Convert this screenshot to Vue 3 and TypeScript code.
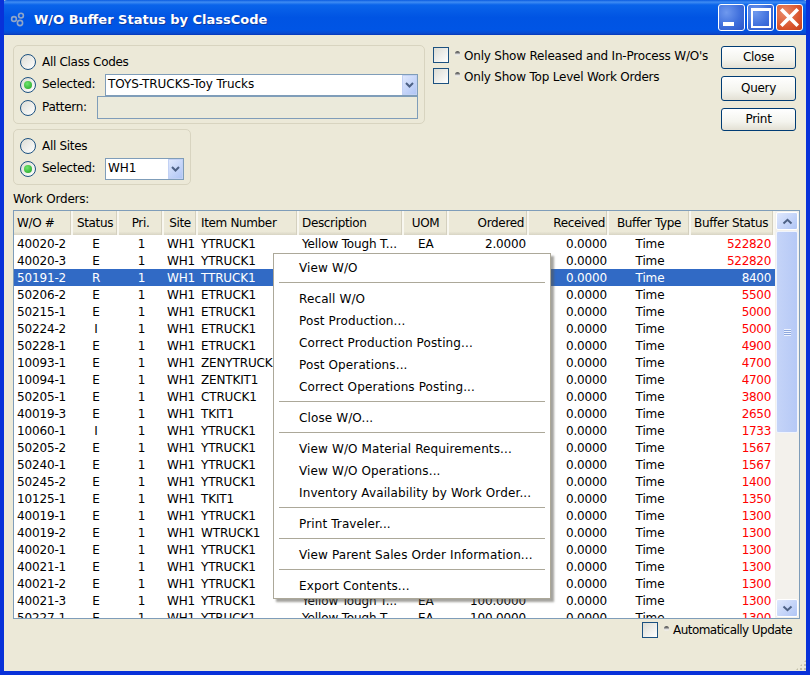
<script setup lang="ts">
interface Row { wo: string; st: string; item: string; desc: string; uom: string; ord: string; buf: string; sel?: boolean }
const y = 'YTRUCK1', e = 'ETRUCK1', d = 'Yellow Tough T...'
const mk = (wo: string, st: string, item: string, buf: string, ord = '100.0000', sel = false): Row => ({ wo, st, item, desc: d, uom: 'EA', ord, buf, sel })
const rows: Row[] = [
  mk('40020-2', 'E', y, '522820', '2.0000'), mk('40020-3', 'E', y, '522820'), mk('50191-2', 'R', 'TTRUCK1', '8400', '100.0000', true),
  mk('50206-2', 'E', e, '5500'), mk('50215-1', 'E', e, '5000'), mk('50224-2', 'I', e, '5000'), mk('50228-1', 'E', e, '4900'),
  mk('10093-1', 'E', 'ZENYTRUCK1', '4700'), mk('10094-1', 'E', 'ZENTKIT1', '4700'), mk('50205-1', 'E', 'CTRUCK1', '3800'),
  mk('40019-3', 'E', 'TKIT1', '2650'), mk('10060-1', 'I', y, '1733'), mk('50205-2', 'E', y, '1567'), mk('50240-1', 'E', y, '1567'),
  mk('50245-2', 'E', y, '1400'), mk('10125-1', 'E', 'TKIT1', '1350'), mk('40019-1', 'E', y, '1300'), mk('40019-2', 'E', 'WTRUCK1', '1300'),
  mk('40020-1', 'E', y, '1300'), mk('40021-1', 'E', y, '1300'), mk('40021-2', 'E', y, '1300'), mk('40021-3', 'E', y, '1300'), mk('50227-1', 'E', y, '1300'),
]
const menu: string[][] = [
  ['View W/O'],
  ['Recall W/O', 'Post Production...', 'Correct Production Posting...', 'Post Operations...', 'Correct Operations Posting...'],
  ['Close W/O...'],
  ['View W/O Material Requirements...', 'View W/O Operations...', 'Inventory Availability by Work Order...'],
  ['Print Traveler...'],
  ['View Parent Sales Order Information...'],
  ['Export Contents...'],
]
const heads = [
  { t: 'W/O #', c: 'c-wo' }, { t: 'Status', c: 'c-st' }, { t: 'Pri.', c: 'c-pri' }, { t: 'Site', c: 'c-site' }, { t: 'Item Number', c: 'c-item' },
  { t: 'Description', c: 'c-desc' }, { t: 'UOM', c: 'c-uom' }, { t: 'Ordered', c: 'c-ord' }, { t: 'Received', c: 'c-rec' }, { t: 'Buffer Type', c: 'c-type' }, { t: 'Buffer Status', c: 'c-buf' },
]
</script>

<template>
  <div class="win">
    <header class="title">
      <svg class="appicon" width="16" height="16" viewBox="0 0 16 16" fill="none" stroke="#8fa6c8" stroke-width="1.6">
        <circle cx="4" cy="7" r="2.4" /><circle cx="11" cy="3.6" r="2.4" /><circle cx="10" cy="11" r="2.6" />
      </svg>
      <span class="title-text">W/O Buffer Status by ClassCode</span>
      <div class="caps">
        <span class="cap cap-min"><i></i></span>
        <span class="cap cap-max"><i></i></span>
        <span class="cap cap-close">
          <svg width="25" height="25" viewBox="0 0 25 25"><path d="M5.5 5.5 L19.5 19.5 M19.5 5.5 L5.5 19.5" stroke="#fff" stroke-width="3.6" stroke-linecap="square" /></svg>
        </span>
      </div>
    </header>

    <main class="body">
      <section class="top">
        <div class="filters">
          <div class="group g-class">
            <div class="line"><span class="radio"></span><span class="lbl">All Class Codes</span></div>
            <div class="line">
              <span class="radio on"></span><span class="lbl lbl-w">Selected:</span>
              <div class="combo combo-class"><span class="combo-text">TOYS-TRUCKS-Toy Trucks</span><span class="drop"><svg width="9" height="6" viewBox="0 0 9 6"><path d="M1 1 L4.5 4.5 L8 1" fill="none" stroke="#4d6185" stroke-width="2" /></svg></span></div>
            </div>
            <div class="line">
              <span class="radio"></span><span class="lbl lbl-p">Pattern:</span>
              <div class="pattern"></div>
            </div>
          </div>
          <div class="group g-site">
            <div class="line"><span class="radio"></span><span class="lbl">All Sites</span></div>
            <div class="line">
              <span class="radio on"></span><span class="lbl lbl-w">Selected:</span>
              <div class="combo combo-site"><span class="combo-text">WH1</span><span class="drop"><svg width="9" height="6" viewBox="0 0 9 6"><path d="M1 1 L4.5 4.5 L8 1" fill="none" stroke="#4d6185" stroke-width="2" /></svg></span></div>
            </div>
          </div>
        </div>
        <div class="checks">
          <div class="check-line"><span class="check"></span><span class="dot"></span><span>Only Show Released and In-Process W/O's</span></div>
          <div class="check-line"><span class="check"></span><span class="dot"></span><span>Only Show Top Level Work Orders</span></div>
        </div>
        <div class="btns">
          <button class="btn">Close</button>
          <button class="btn btn-q">Query</button>
          <button class="btn">Print</button>
        </div>
      </section>

      <div class="wo-label">Work Orders:</div>

      <section class="table">
        <div class="grid">
          <div class="thead">
            <div v-for="h in heads" :key="h.t" class="th" :class="h.c">{{ h.t }}</div>
          </div>
          <div class="tbody">
            <div v-for="r in rows" :key="r.wo" class="tr" :class="{ sel: r.sel }">
              <div class="td c-wo">{{ r.wo }}</div>
              <div class="td c-st">{{ r.st }}</div>
              <div class="td c-pri">1</div>
              <div class="td c-site">WH1</div>
              <div class="td c-item">{{ r.item }}</div>
              <div class="td c-desc">{{ r.desc }}</div>
              <div class="td c-uom">{{ r.uom }}</div>
              <div class="td c-ord">{{ r.ord }}</div>
              <div class="td c-rec">0.0000</div>
              <div class="td c-type">Time</div>
              <div class="td c-buf buf">{{ r.buf }}</div>
            </div>
          </div>
        </div>
        <div class="sbar">
          <span class="sbtn"><svg width="11" height="7" viewBox="0 0 11 7"><path d="M1.5 5.5 L5.5 1.8 L9.5 5.5" fill="none" stroke="#4d6185" stroke-width="2" /></svg></span>
          <div class="track">
            <div class="thumb"><span class="grip"></span></div>
          </div>
          <span class="sbtn"><svg width="11" height="7" viewBox="0 0 11 7"><path d="M1.5 1.5 L5.5 5.2 L9.5 1.5" fill="none" stroke="#4d6185" stroke-width="2" /></svg></span>
        </div>

        <nav class="menu">
          <template v-for="(g, i) in menu" :key="i">
            <div v-if="i > 0" class="sep"></div>
            <div v-for="m in g" :key="m" class="mi">{{ m }}</div>
          </template>
        </nav>
      </section>

      <div class="bottom">
        <span class="check"></span><span class="dot"></span><span class="auto">Automatically Update</span>
      </div>
    </main>
    <span class="grip-corner"></span>
  </div>
</template>

<style>
html, body { margin: 0; padding: 0; }
</style>

<style scoped>
.win {
  position: relative;
  width: 810px; height: 675px; box-sizing: border-box; overflow: hidden;
  display: flex; flex-direction: column;
  background: #ece9d8;
  font: 12px/15px "DejaVu Sans", sans-serif; color: #000;
  border-left: 4px solid #0831d9; border-right: 4px solid #0831d9; border-bottom: 4px solid #0831d9;
}
.title {
  flex: none; height: 35px; margin: 0 -4px; padding: 3px 7px 0 10px; box-sizing: border-box; display: flex; align-items: center;
  border-radius: 7px 7px 0 0;
  background: linear-gradient(180deg, #0a5be0 0%, #3f8cf3 6%, #0a64ea 14%, #0054e3 50%, #0055e5 85%, #0a4bd0 95%, #0636b8 100%);
}
.appicon { flex: none; margin-right: 8px; margin-top: 1px; }
.title-text { color: #fff; font-weight: 700; font-size: 13px; letter-spacing: 0; text-shadow: 1px 1px 0 #0f3a9e; }
.caps { margin-left: auto; display: flex; gap: 2px; margin-top: -3px; }
.cap { width: 27px; height: 27px; box-sizing: border-box; border: 1px solid #fff; border-radius: 3px; position: relative; display: flex; align-items: center; justify-content: center; }
.cap-min, .cap-max { background: radial-gradient(circle at 30% 30%, #6f99ee 0%, #3f6fdc 55%, #2c55c8 100%); }
.cap-min i { position: absolute; left: 4px; bottom: 4px; width: 11px; height: 4px; background: #fff; }
.cap-max i { width: 20px; height: 20px; box-sizing: border-box; border: 2px solid #fff; border-top-width: 3px; }
.cap-close { background: radial-gradient(circle at 30% 30%, #ea8a68 0%, #d9552e 60%, #c4401c 100%); }

.body { flex: 1; min-height: 0; padding: 10px 9px 0; display: flex; flex-direction: column; }
.top { display: flex; flex: none; height: 143px; }
.filters { width: 412px; display: flex; flex-direction: column; gap: 5px; }
.group { box-sizing: border-box; border: 1px solid #d8d4c0; border-radius: 5px; padding: 5px 6px 0; }
.g-class { height: 79px; }
.g-site { width: 178px; height: 56px; }
.line { display: flex; align-items: center; height: 23px; white-space: nowrap; }
.line:first-child { height: 22px; }
.lbl { letter-spacing: -0.3px; }
.radio {
  flex: none; width: 16px; height: 16px; box-sizing: border-box; border: 1px solid #1c5180; border-radius: 50%;
  background: linear-gradient(135deg, #dcdcd4, #fff); margin-right: 6px; position: relative;
}
.radio.on::after { content: ""; position: absolute; left: 3px; top: 3px; width: 8px; height: 8px; border-radius: 50%; background: radial-gradient(circle at 40% 35%, #6fe56f, #21a121); }
.lbl-w { width: 63px; flex: none; }
.lbl-p { width: 55px; flex: none; }
.combo { height: 22px; box-sizing: border-box; border: 1px solid #7f9db9; background: #fff; display: flex; align-items: center; padding-left: 2px; }
.combo-class { width: 314px; }
.combo-site { width: 80px; }
.combo-text { flex: 1; letter-spacing: -0.05px; }
.drop { flex: none; width: 15px; height: 20px; background: linear-gradient(135deg, #dfe8fd, #b0c5f5); border: 1px solid #c2d1f4; box-sizing: border-box; display: flex; align-items: center; justify-content: center; }
.pattern { width: 322px; height: 23px; box-sizing: border-box; border: 1px solid #7f9db9; background: #ebeadb; }

.checks { margin-left: 8px; padding-top: 2px; width: 280px; display: flex; flex-direction: column; gap: 5px; letter-spacing: -0.2px; }
.check-line { display: flex; align-items: center; height: 16px; white-space: nowrap; }
.check-line > span:last-child { position: relative; top: 1px; }
.check { flex: none; width: 16px; height: 16px; box-sizing: border-box; border: 1px solid #1c5180; background: linear-gradient(135deg, #dcdcd4, #fff); }
.dot { flex: none; width: 5px; height: 5px; margin: 0 4px 0 6px; border-radius: 50% 50% 30% 30%; background: linear-gradient(180deg, #555 0%, #777 40%, #ddd 60%, #f4f2e8 100%); position: relative; top: -2px; }
.btns { margin-left: auto; margin-right: 1px; width: 75px; padding-top: 1px; display: flex; flex-direction: column; gap: 7px; }
.btn {
  width: 75px; height: 23px; padding: 0; box-sizing: border-box; border: 1px solid #003c74; border-radius: 3px;
  background: linear-gradient(180deg, #fff 0%, #f4f4ee 60%, #e3e0d4 100%); font: inherit; color: #000; letter-spacing: -0.3px;
}
.btn-q { height: 25px; }

.wo-label { flex: none; height: 18px; line-height: 15px; margin-top: 4px; letter-spacing: -0.2px; }

.table { position: relative; flex: none; width: 787px; height: 409px; box-sizing: border-box; border: 1px solid #7f9db9; background: #fff; display: flex; }
.grid { width: 761px; flex: none; overflow: hidden; display: flex; flex-direction: column; }
.thead { flex: none; height: 24px; display: flex; letter-spacing: -0.35px; background: linear-gradient(180deg, #ece9d8 0%, #ece9d8 85%, #d8d4c4 100%); }
.th { flex: none; box-sizing: border-box; height: 24px; line-height: 25px; padding: 0 3px; white-space: nowrap; overflow: hidden; border-right: 2px solid #f8f7f0; box-shadow: inset -1px 0 0 #d4d0bf; text-align: center; }
.th.c-wo, .th.c-item, .th.c-desc { text-align: left; }
.th.c-ord, .th.c-rec { text-align: right; }
.tbody { flex: 1; overflow: hidden; letter-spacing: -0.15px; }
.tr { display: flex; height: 17px; }
.tr.sel { background: #316ac5; color: #fff; }
.td { flex: none; box-sizing: border-box; height: 17px; line-height: 18px; padding: 0 3px; white-space: nowrap; overflow: hidden; text-align: center; }
.c-wo { width: 59px; } .c-st { width: 46px; } .c-pri { width: 45px; } .c-site { width: 34px; } .c-item { width: 101px; }
.c-desc { width: 105px; } .c-uom { width: 45px; } .c-ord { width: 80px; } .c-rec { width: 80px; } .c-type { width: 82px; } .c-buf { width: 84px; }
.td.c-wo, .td.c-item, .td.c-desc { text-align: left; }
.td.c-uom { text-align: left; padding-left: 14px; }
.td.c-ord, .td.c-rec, .td.c-buf { text-align: right; }
.td.c-buf { padding-right: 4px; letter-spacing: -0.3px; }
.td.c-rec { padding-right: 2px; }
.th.c-rec { padding-right: 2px; }
.th.c-buf { text-align: right; padding-right: 5px; }
.buf { color: #f00; }
.tr.sel .buf { color: #fff; }

.sbar { flex: 1; display: flex; flex-direction: column; background: #f3f1ec; }
.sbtn { flex: none; margin: 1px; height: 18px; box-sizing: border-box; border: 1px solid #fff; border-radius: 2px; background: linear-gradient(135deg, #dfe8fd, #b0c5f5); display: flex; align-items: center; justify-content: center; }
.track { flex: 1; min-height: 0; }
.thumb { height: 202px; margin: 0 1px; box-sizing: border-box; border: 1px solid #f0f4fd; border-radius: 2px; background: linear-gradient(90deg, #c5d4f8, #b6c9f6); display: flex; align-items: center; justify-content: center; }
.grip { width: 7px; height: 7px; background: repeating-linear-gradient(180deg, #eef3fe 0 1px, #8da7dd 1px 2px); }

.menu {
  position: absolute; left: 259px; top: 42px; width: 278px; height: 346px; box-sizing: border-box; padding: 3px 2px 2px;
  background: #fff; border: 1px solid #aca899; box-shadow: 3px 3px 2px rgba(90, 88, 78, .55); letter-spacing: 0.12px;
}
.mi { height: 22px; line-height: 22px; padding-left: 23px; white-space: nowrap; }
.sep { height: 1px; margin: 3px 3px 5px; background: #aca899; }

.bottom { flex: none; height: 18px; margin-top: 2px; display: flex; align-items: center; justify-content: flex-end; padding-right: 5px; white-space: nowrap; }
.auto { letter-spacing: -0.55px; }
.grip-corner { position: absolute; right: -1px; bottom: 0; width: 12px; height: 12px; background: radial-gradient(circle, #c3bfa8 0 1px, transparent 1.2px) 0 0 / 4px 4px; clip-path: polygon(100% 0, 100% 100%, 0 100%); }
</style>
